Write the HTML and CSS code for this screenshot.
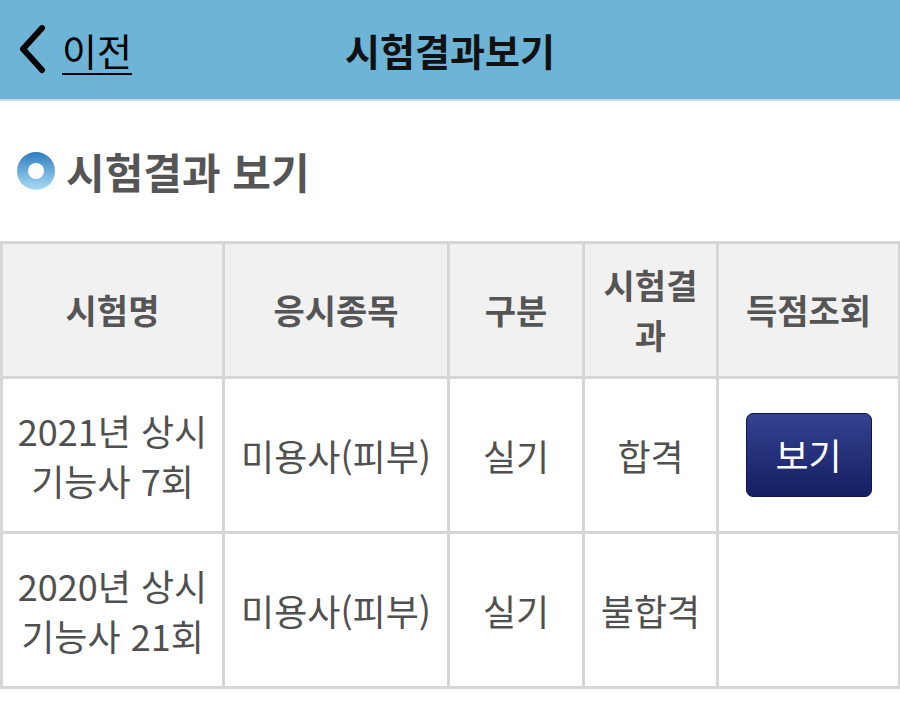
FILE: index.html
```html
<!DOCTYPE html>
<html lang="ko">
<head>
<meta charset="utf-8">
<link rel="stylesheet" href="styles.css">
</head>
<body>
<header class="topbar">
  <a class="back" href="#">
    <svg class="chev" width="32" height="50" viewBox="0 0 32 50"><path d="M26 3 L7 24 L26 45" fill="none" stroke="#000" stroke-width="6" stroke-linecap="round" stroke-linejoin="round"/></svg>
    <span class="back-text">이전</span>
  </a>
  <h1 class="page-title">시험결과보기</h1>
</header>
<section class="section-head">
  <svg class="bullet" width="40" height="40" viewBox="0 0 40 40">
    <defs>
      <linearGradient id="g" x1="0" y1="0" x2="0" y2="1">
        <stop offset="0" stop-color="#2f7cc0"/>
        <stop offset="1" stop-color="#a9dcf5"/>
      </linearGradient>
    </defs>
    <circle cx="20" cy="20" r="19" fill="url(#g)"/>
    <circle cx="20" cy="20" r="8" fill="#fff"/>
  </svg>
  <h2 class="section-title">시험결과 보기</h2>
</section>
<table class="results">
  <colgroup>
    <col class="c1"><col class="c2"><col class="c3"><col class="c4"><col class="c5">
  </colgroup>
  <thead>
    <tr>
      <th>시험명</th>
      <th>응시종목</th>
      <th>구분</th>
      <th>시험결<br>과</th>
      <th>득점조회</th>
    </tr>
  </thead>
  <tbody>
    <tr>
      <td>2021년 상시<br>기능사 7회</td>
      <td>미용사(피부)</td>
      <td>실기</td>
      <td>합격</td>
      <td><a class="btn" href="#">보기</a></td>
    </tr>
    <tr>
      <td>2020년 상시<br>기능사 21회</td>
      <td>미용사(피부)</td>
      <td>실기</td>
      <td>불합격</td>
      <td></td>
    </tr>
  </tbody>
</table>
</body>
</html>
```
FILE: styles.css
```css
html, body {
  margin: 0;
  padding: 0;
  background: #fff;
  font-family: "Noto Sans CJK KR", "Noto Sans", sans-serif;
}
.topbar {
  height: 99px;
  background: #6db4d7;
  border-bottom: 2px solid #c9dbe4;
  display: flex;
  align-items: center;
  position: relative;
}
.back {
  display: flex;
  align-items: center;
  margin-left: 16px;
  color: #000;
  text-decoration: none;
  position: relative;
  z-index: 1;
}
.chev {
  display: block;
}
.back-text {
  font-size: 38px;
  margin-left: 14px;
  text-decoration: underline;
  text-underline-offset: 7px;
  text-decoration-thickness: 2px;
  line-height: 1;
}
.page-title {
  position: absolute;
  left: 0;
  right: 0;
  margin: 0;
  text-align: center;
  font-size: 38px;
  font-weight: 700;
  color: #111;
  line-height: 1;
}
.section-head {
  height: 140px;
  display: flex;
  align-items: center;
  padding-left: 16px;
  box-sizing: border-box;
}
.bullet {
  display: block;
}
.section-title {
  margin: 0 0 0 10px;
  font-size: 42px;
  font-weight: 700;
  color: #555;
  line-height: 1;
}
.results {
  border-collapse: collapse;
  width: 898px;
  table-layout: fixed;
}
.c1 { width: 222px; }
.c2 { width: 225px; }
.c3 { width: 135px; }
.c4 { width: 134px; }
.c5 { width: 182px; }
.results th, .results td {
  border: 3px solid #d6d6d6;
  text-align: center;
  line-height: 50px;
  color: #555;
  padding: 0;
}
.results th {
  background: #f1f1f1;
  font-weight: 700;
  font-size: 34px;
  height: 132px;
}
.results td {
  font-weight: 400;
  font-size: 36px;
  color: #505050;
  height: 152px;
}
.btn {
  display: inline-block;
  width: 126px;
  height: 84px;
  line-height: 80px;
  border-radius: 7px;
  background: linear-gradient(#34428f, #141e63);
  border: 1px solid #0d1550;
  box-sizing: border-box;
  color: #fff;
  font-size: 36px;
  text-decoration: none;
  vertical-align: middle;
}
```
